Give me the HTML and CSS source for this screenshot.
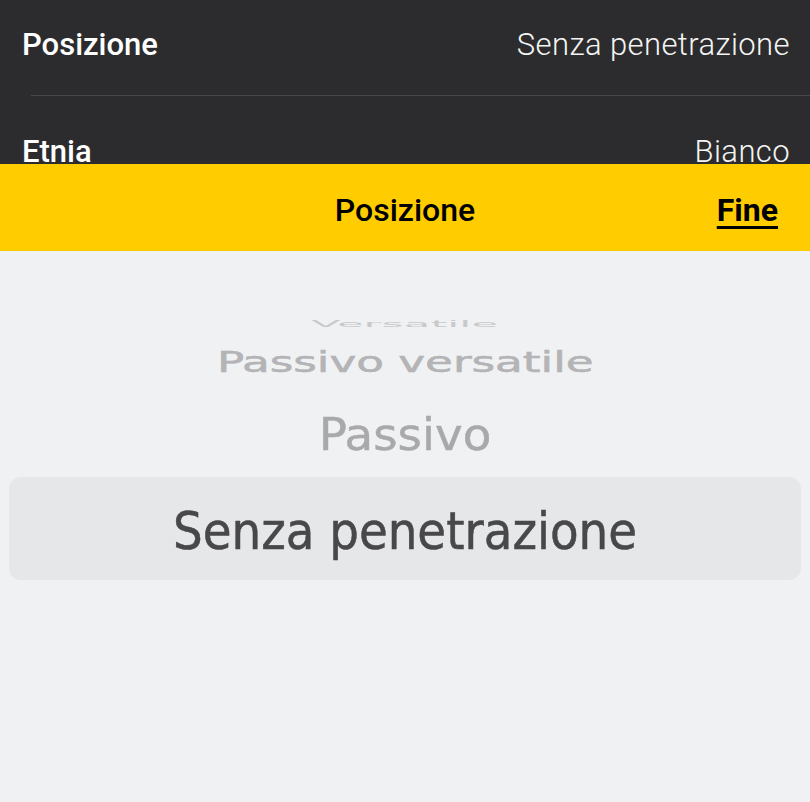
FILE: index.html
```html
<!DOCTYPE html>
<html lang="it">
<head>
  <meta charset="UTF-8">
  <meta name="viewport" content="width=device-width, initial-scale=1.0">
  <title>Posizione</title>
  <link rel="stylesheet" href="styles.css">
</head>
<body>
  <div class="settings">
    <div class="setting">
      <span class="label">Posizione</span>
      <span class="value">Senza penetrazione</span>
    </div>
    <div class="setting last">
      <span class="label">Etnia</span>
      <span class="value">Bianco</span>
    </div>
  </div>

  <div class="sheet">
    <div class="toolbar">
      <span class="toolbar-title">Posizione</span>
      <a class="done" href="#">Fine</a>
    </div>
    <div class="picker">
      <div class="option far"><span>Versatile</span></div>
      <div class="option near"><span>Passivo versatile</span></div>
      <div class="option prev"><span>Passivo</span></div>
      <div class="option selected"><span>Senza penetrazione</span></div>
    </div>
  </div>
</body>
</html>
```

FILE: styles.css
```css
body {
  margin: 0;
  width: 810px;
  height: 802px;
  overflow: hidden;
  font-family: "DejaVu Sans Condensed", "DejaVu Sans", sans-serif;
  background-color: #f0f1f3;
}

.settings {
  background: #2c2c2e;
  height: 164px;
  overflow: hidden;
  padding-left: 31px;
}

.setting {
  display: flex;
  justify-content: space-between;
  align-items: center;
  height: 89px;
  padding: 0 20px 6px 0;
  border-bottom: 1px solid #48484a;
  font-family: Roboto, sans-serif;
}

.setting.last {
  border-bottom: none;
  height: 110px;
  padding-bottom: 0;
}

.label {
  margin-left: -9px;
  color: #ffffff;
  font-size: 31px;
  font-weight: 500;
}

.value {
  color: #f4f4f4;
  font-size: 31px;
  font-weight: 300;
  letter-spacing: 0.4px;
}

.toolbar {
  position: relative;
  background: #ffcc00;
  height: 87px;
  box-sizing: border-box;
  padding-top: 4px;
  display: flex;
  align-items: center;
  justify-content: center;
  font-family: Roboto, sans-serif;
}

.toolbar-title {
  color: #000;
  font-size: 32px;
  font-weight: 500;
}

.done {
  position: absolute;
  right: 32px;
  color: #000;
  font-size: 32px;
  font-weight: bold;
  text-decoration: underline;
  text-decoration-thickness: 3px;
  text-underline-offset: 5px;
}

.picker {
  height: 551px;
  padding: 63px 9px 0;
  box-sizing: border-box;
  display: flex;
  flex-direction: column;
  align-items: stretch;
  overflow: hidden;
}

.option {
  display: flex;
  align-items: center;
  justify-content: center;
  font-size: 52px;
  white-space: nowrap;
}

.option span {
  display: inline-block;
}

.option.far {
  height: 20px;
  color: #c9c9cb;
  font-size: 26px;
}

.option.far span {
  transform: scale(1.85, 0.35);
}

.option.near {
  height: 56px;
  color: #b4b4b6;
  font-size: 34px;
}

.option.near span {
  transform: scale(1.48, 0.85);
  -webkit-text-stroke: 0.6px #b4b4b6;
}

.option.prev {
  height: 87px;
  color: #a9a9ab;
}

.option.prev span {
  transform: scaleY(0.87);
  -webkit-text-stroke: 0.5px #a9a9ab;
}

.option.selected {
  height: 103px;
  padding-top: 4px;
  box-sizing: border-box;
  color: #48484a;
  background: #e6e7e9;
  border-radius: 12px;
}

.option.selected span {
  -webkit-text-stroke: 0.5px #48484a;
}
```
